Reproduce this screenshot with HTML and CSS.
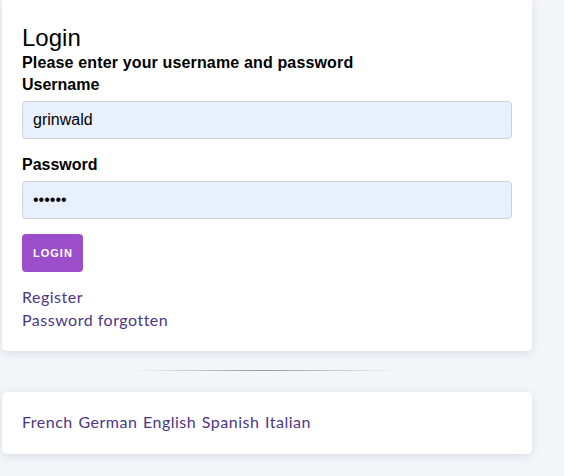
FILE: index.html
```html
<!DOCTYPE html>
<html lang="en">
<head>
<meta charset="utf-8">
<title>Login</title>
<link rel="stylesheet" href="styles.css">
</head>
<body>
<div class="page">
  <section class="card login-card">
    <h1 class="title">Login</h1>
    <p class="subtitle">Please enter your username and password</p>
    <form class="form">
      <div class="field">
        <label class="label" for="username">Username</label>
        <input class="input" id="username" type="text" value="grinwald">
      </div>
      <div class="field">
        <label class="label" for="password">Password</label>
        <input class="input" id="password" type="password" value="123456">
      </div>
      <button class="button" type="button">LOGIN</button>
    </form>
    <div class="links">
      <a class="link" href="#">Register</a>
      <a class="link" href="#">Password forgotten</a>
    </div>
  </section>
  <hr class="separator">
  <section class="card lang-card">
    <nav class="langs"><a class="link" href="#">French</a> <a class="link" href="#">German</a> <a class="link" href="#">English</a> <a class="link" href="#">Spanish</a> <a class="link" href="#">Italian</a></nav>
  </section>
</div>
</body>
</html>
```

FILE: styles.css
```css
html, body {
  margin: 0;
  padding: 0;
}

body {
  background: #f4f5f9;
  font-family: "Liberation Sans", Arial, sans-serif;
  color: #000;
  min-height: 476px;
}

.page {
  width: 530px;
  margin-left: 2px;
}

.card {
  background: #fff;
  border-radius: 0 0 5px 5px;
  box-shadow: 0 2px 10px rgba(30, 40, 80, 0.12);
  box-sizing: border-box;
}

.login-card {
  padding: 24px 20px 20px 20px;
}

.title {
  margin: 0;
  font-size: 24px;
  font-weight: 400;
  line-height: 28px;
}

.subtitle {
  margin: 0;
  font-size: 16px;
  font-weight: 700;
  line-height: 22px;
  letter-spacing: 0.15px;
}

.form {
  display: flex;
  flex-direction: column;
  align-items: flex-start;
}

.field {
  display: flex;
  flex-direction: column;
  width: 100%;
  margin-bottom: 15px;
}

.label {
  font-size: 16px;
  font-weight: 700;
  line-height: 22px;
  margin-bottom: 5px;
}

.input {
  box-sizing: border-box;
  width: 100%;
  height: 38px;
  margin: 0;
  padding: 0 10px;
  border: 1px solid #cfd2d8;
  border-radius: 4px;
  background: #e8f0fe;
  font-family: "Liberation Sans", Arial, sans-serif;
  font-size: 16px;
  color: #000;
  outline: none;
}

.button {
  height: 38px;
  padding: 0 10px 0 11px;
  border: 0;
  border-radius: 4px;
  background: #9b4dca;
  color: #fff;
  font-family: "Liberation Sans", Arial, sans-serif;
  font-size: 11px;
  font-weight: 700;
  letter-spacing: 1px;
  cursor: pointer;
}

.links {
  display: flex;
  flex-direction: column;
  align-items: flex-start;
  margin-top: 13px;
}

.link {
  font-family: Lato, "Open Sans", sans-serif;
  font-size: 16px;
  line-height: 23px;
  letter-spacing: 0.5px;
  color: #4d3585;
  text-decoration: none;
}

.separator {
  width: 267px;
  height: 1px;
  margin: 19px auto 21px;
  border: 0;
  background: linear-gradient(to right, rgba(140, 140, 150, 0), rgba(140, 140, 150, 0.9) 48%, rgba(140, 140, 150, 0));
}

.lang-card {
  border-radius: 5px;
  padding: 18px 20px 21px;
}

.langs {
  font-family: Lato, "Open Sans", sans-serif;
  font-size: 16px;
  line-height: 23px;
  word-spacing: 1.5px;
}
```
